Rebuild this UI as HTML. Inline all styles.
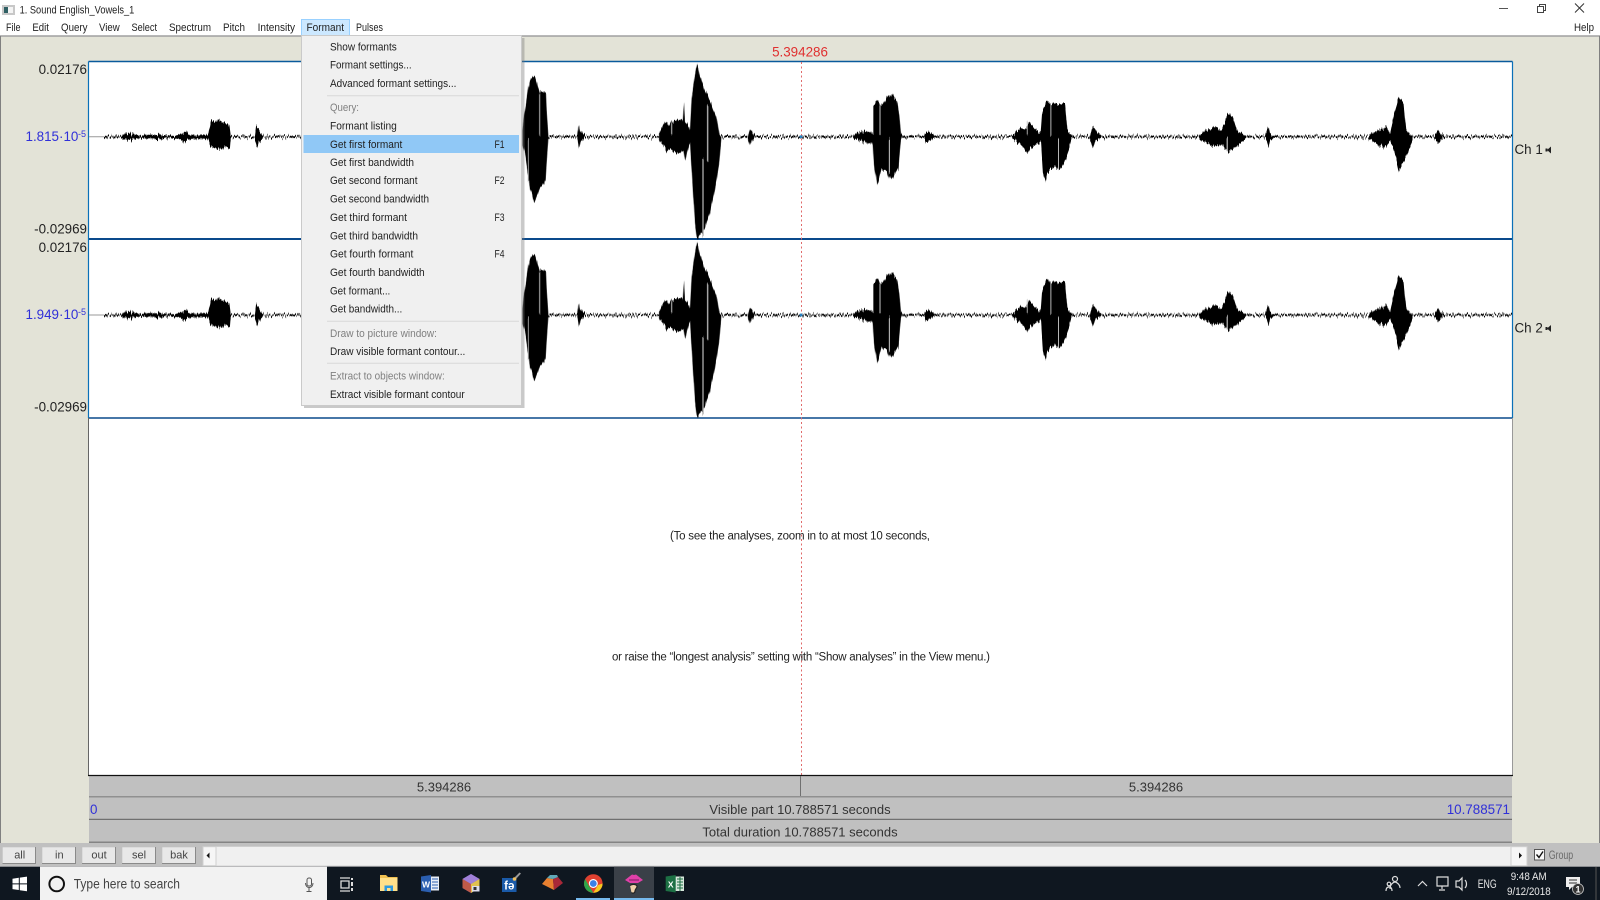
<!DOCTYPE html>
<html><head><meta charset="utf-8"><title>1. Sound English_Vowels_1</title>
<style>
html,body{margin:0;padding:0;background:#fff;width:1600px;height:900px;overflow:hidden}
svg{display:block}
text{font-family:"Liberation Sans",Arial,sans-serif}
.m{font-size:11px;fill:#222}
.d{font-size:11px;fill:#808080}
.k{font-size:13.4px;fill:#222}
.b{font-size:13.4px;fill:#3030d8}
</style></head><body>
<svg xmlns="http://www.w3.org/2000/svg" width="1600" height="900" viewBox="0 0 1600 900">
<defs>
<filter id="jag" filterUnits="userSpaceOnUse" x="85" y="50" width="1430" height="200" color-interpolation-filters="sRGB">
<feTurbulence type="fractalNoise" baseFrequency="0.7 0.015" numOctaves="2" seed="7" result="n"/>
<feColorMatrix in="n" type="matrix" values="0 0 0 0 .5  0 1 0 0 0  0 0 1 0 0  0 0 0 0 1" result="m"/>
<feDisplacementMap in="SourceGraphic" in2="m" scale="9" xChannelSelector="R" yChannelSelector="G"/>
</filter>
<g id="wave">
<line x1="89" y1="136.7" x2="104" y2="136.7" stroke="#aaa" stroke-width="1.2"/>
<g filter="url(#jag)">
<line x1="104" y1="136.7" x2="1512" y2="136.7" stroke="#000" stroke-width="1.8" stroke-dasharray="5 .7 2 .7 7 .7"/>
<g transform="translate(0,50) scale(.33333)" fill="#000">
<polygon points="365,256 372,252 385,250 395,252 410,254 420,258 440,254 460,255 480,252 490,257 520,258 540,254 558,244 566,254 590,256 625,254 632,216 640,210 660,216 675,216 688,226 692,258 692,268 690,294 675,292 665,296 652,298 640,292 632,290 625,268 590,266 566,268 556,278 540,268 520,264 490,266 480,268 460,266 440,266 420,264 400,268 385,270 372,270 365,264"/>
<polygon points="765,258 769,226 778,242 788,258 788,266 778,272 770,291 765,270"/>
</g>
<g transform="translate(520,40) scale(.33333)" fill="#000">
<polygon points="7,270 12,225 18,190 25,140 33,115 40,108 47,115 52,135 60,158 66,154 72,158 78,158 80,210 85,285 85,295 80,370 77,420 70,436 60,441 52,466 48,476 43,488 36,461 30,446 25,410 15,340 7,310"/>
<polygon points="172,285 176,254 181,272 195,286 195,294 182,305 177,324 172,300"/>
<polygon points="417,280 425,264 435,244 442,250 448,256 455,244 465,242 480,239 488,244 492,190 495,244 505,258 510,270 515,172 525,104 532,70 540,112 555,152 570,182 590,232 598,280 604,288 604,296 597,378 585,448 570,518 555,562 540,586 535,594 530,586 525,548 518,440 510,310 502,336 495,366 490,331 478,336 465,341 452,331 440,332 425,310 417,300"/>
<polygon points="684,285 690,268 695,274 705,286 705,294 695,302 690,316 684,298"/>
<polygon points="1000,284 1015,278 1035,274 1050,276 1060,280 1060,194 1075,184 1085,194 1100,174 1115,162 1130,178 1138,222 1143,280 1146,288 1146,296 1143,300 1135,388 1125,398 1112,421 1100,391 1085,391 1072,436 1062,378 1058,308 1045,311 1030,304 1010,300 1000,296"/>
<line x1="59" y1="160" x2="59" y2="285" stroke="#bbb" stroke-width="3"/>
<line x1="25" y1="295" x2="25" y2="420" stroke="#999" stroke-width="3"/>
<line x1="549" y1="355" x2="549" y2="585" stroke="#aaa" stroke-width="4"/>
<line x1="563" y1="200" x2="563" y2="360" stroke="#bbb" stroke-width="4"/>
<line x1="1080" y1="190" x2="1080" y2="285" stroke="#ccc" stroke-width="3"/>
<line x1="1108" y1="295" x2="1108" y2="400" stroke="#ccc" stroke-width="3"/>
<line x1="455" y1="250" x2="455" y2="285" stroke="#ccc" stroke-width="3"/>
</g>
<g transform="translate(900,50) scale(.44643,.33333)" fill="#000">
<polygon points="55,255 60,244 68,248 78,258 78,264 68,270 58,278 55,268"/>
<polygon points="252,256 262,242 272,236 282,236 290,214 296,226 303,238 315,250 318,194 327,156 335,162 345,159 355,162 370,162 375,242 384,255 384,268 372,328 360,361 345,351 330,368 326,398 320,366 316,278 305,286 295,291 285,311 272,286 260,273 252,265"/>
<polygon points="426,255 432,229 440,242 450,256 450,264 438,270 432,298 426,270"/>
<polygon points="670,256 680,244 695,239 705,229 720,242 728,214 735,189 745,199 755,242 775,258 775,265 755,288 745,298 735,304 720,286 700,288 680,273 670,265"/>
<polygon points="818,255 825,229 829,250 836,258 836,264 829,268 825,296 820,268"/>
<polygon points="1050,256 1060,248 1075,239 1090,232 1098,250 1108,184 1118,139 1128,159 1134,242 1148,258 1148,268 1135,318 1118,368 1108,308 1098,270 1090,291 1070,286 1050,266"/>
<polygon points="1198,255 1205,242 1212,252 1220,258 1220,264 1212,268 1205,281 1198,266"/>
<line x1="338" y1="160" x2="338" y2="260" stroke="#ccc" stroke-width="2"/>
<line x1="355" y1="265" x2="355" y2="360" stroke="#ccc" stroke-width="2"/>
<line x1="285" y1="215" x2="285" y2="255" stroke="#bbb" stroke-width="2"/>
<line x1="733" y1="265" x2="733" y2="305" stroke="#aaa" stroke-width="3"/>
</g>
</g>
</g>
</defs>

<!-- window chrome -->
<rect x="0" y="0" width="1600" height="36" fill="#fff"/>
<rect x="2" y="5" width="13" height="10" fill="#c8c8c8"/>
<rect x="4" y="7" width="9" height="6" fill="#f4f4f4"/>
<rect x="4" y="7" width="4" height="6" fill="#2f5f63"/>
<text x="19.6" y="13.5" class="m" textLength="114.7" lengthAdjust="spacingAndGlyphs">1. Sound English_Vowels_1</text>
<rect x="301.5" y="19.5" width="48" height="16" fill="#cce8ff" stroke="#99d1ff"/>
<g>
<text x="6" y="31" class="m" textLength="14.5" lengthAdjust="spacingAndGlyphs">File</text>
<text x="32.4" y="31" class="m" textLength="16.5" lengthAdjust="spacingAndGlyphs">Edit</text>
<text x="61" y="31" class="m" textLength="26.5" lengthAdjust="spacingAndGlyphs">Query</text>
<text x="99" y="31" class="m" textLength="20.7" lengthAdjust="spacingAndGlyphs">View</text>
<text x="131.5" y="31" class="m" textLength="25.5" lengthAdjust="spacingAndGlyphs">Select</text>
<text x="169" y="31" class="m" textLength="42" lengthAdjust="spacingAndGlyphs">Spectrum</text>
<text x="223" y="31" class="m" textLength="22" lengthAdjust="spacingAndGlyphs">Pitch</text>
<text x="257.6" y="31" class="m" textLength="37.5" lengthAdjust="spacingAndGlyphs">Intensity</text>
<text x="306.5" y="31" class="m" textLength="37.5" lengthAdjust="spacingAndGlyphs">Formant</text>
<text x="356" y="31" class="m" textLength="27" lengthAdjust="spacingAndGlyphs">Pulses</text>
<text x="1574" y="31" class="m" textLength="20" lengthAdjust="spacingAndGlyphs">Help</text>
</g>
<line x1="1499" y1="8.5" x2="1508" y2="8.5" stroke="#555"/>
<rect x="1537.5" y="6.5" width="6" height="6" fill="#fff" stroke="#444"/>
<path d="M1539.5 6.5V4.5H1545.5V10.5H1543.5" fill="none" stroke="#444"/>
<path d="M1575 3.5L1584 12.5M1584 3.5L1575 12.5" stroke="#333" fill="none"/>

<!-- canvas -->
<rect x="0" y="36" width="1600" height="807" fill="#e3e3d7"/>
<line x1="0" y1="36" x2="1600" y2="36" stroke="#a0a0a0" stroke-width="1.4"/>
<line x1="0.5" y1="36" x2="0.5" y2="843" stroke="#808080"/>
<line x1="1599.5" y1="36" x2="1599.5" y2="843" stroke="#808080"/>
<rect x="88.5" y="61.5" width="1424" height="714" fill="#fff"/>
<line x1="88.5" y1="61.5" x2="1512.5" y2="61.5" stroke="#0a5a9c" stroke-width="1.4"/>
<line x1="88.5" y1="239" x2="1512.5" y2="239" stroke="#0a4a8c" stroke-width="2"/>
<line x1="88.5" y1="418" x2="1512.5" y2="418" stroke="#0a4a8c" stroke-width="1.6"/>
<line x1="88.5" y1="61.5" x2="88.5" y2="418" stroke="#0a70b8" stroke-width="1.2"/>
<line x1="1512.5" y1="61.5" x2="1512.5" y2="418" stroke="#0a70b8" stroke-width="1.2"/>
<line x1="88.5" y1="418" x2="88.5" y2="775" stroke="#666"/>
<line x1="1512.5" y1="418" x2="1512.5" y2="775" stroke="#999"/>

<use href="#wave"/>
<use href="#wave" transform="translate(0,178.3)"/>
<line x1="801.5" y1="62" x2="801.5" y2="775" stroke="#e06a6a" stroke-width="1" stroke-dasharray="2 2.5"/>
<circle cx="801" cy="136.7" r="1.5" fill="#2a80c0"/>
<circle cx="801" cy="315" r="1.5" fill="#2a80c0"/>

<text x="800" y="56.5" text-anchor="middle" font-size="13.4" fill="#e03030">5.394286</text>
<g class="axis">
<text x="87" y="74" text-anchor="end" class="k">0.02176</text>
<text x="87" y="233.7" text-anchor="end" class="k">-0.02969</text>
<text x="87" y="252" text-anchor="end" class="k">0.02176</text>
<text x="87" y="411.7" text-anchor="end" class="k">-0.02969</text>
<text x="25.5" y="141.2" class="b">1.815·10</text><text x="78" y="137" font-size="9" fill="#3030d8">-5</text>
<text x="25.5" y="319.2" class="b">1.949·10</text><text x="78" y="315" font-size="9" fill="#3030d8">-5</text>
<text x="1514.5" y="154" class="k">Ch 1</text>
<path d="M1547 150l4-3.5v7z" fill="#222"/><rect x="1545.5" y="148.5" width="2" height="3" fill="#222"/>
<text x="1514.5" y="332.5" class="k">Ch 2</text>
<path d="M1547 328.5l4-3.5v7z" fill="#222"/><rect x="1545.5" y="327" width="2" height="3" fill="#222"/>
</g>
<text x="670" y="539.3" font-size="11.5" fill="#222" textLength="260" lengthAdjust="spacing">(To see the analyses, zoom in to at most 10 seconds,</text>
<text x="612" y="660.7" font-size="11.5" fill="#222" textLength="378" lengthAdjust="spacing">or raise the “longest analysis” setting with “Show analyses” in the View menu.)</text>

<!-- bottom bars -->
<rect x="89" y="775" width="1423" height="68" fill="#c0c0c0"/>
<line x1="88" y1="775.5" x2="1513" y2="775.5" stroke="#111" stroke-width="1.2"/>
<line x1="89" y1="796.8" x2="1512" y2="796.8" stroke="#808080" stroke-width="1.2"/>
<line x1="89" y1="819.4" x2="1512" y2="819.4" stroke="#707070" stroke-width="1.2"/>
<line x1="89" y1="842.2" x2="1512" y2="842.2" stroke="#707070" stroke-width="1.2"/>
<line x1="800.5" y1="776" x2="800.5" y2="796" stroke="#707070"/>
<text x="444" y="791.5" text-anchor="middle" font-size="13" fill="#333">5.394286</text>
<text x="1156" y="791.5" text-anchor="middle" font-size="13" fill="#333">5.394286</text>
<text x="800" y="814" text-anchor="middle" font-size="13" fill="#333">Visible part 10.788571 seconds</text>
<text x="800" y="836.5" text-anchor="middle" font-size="13" fill="#333">Total duration 10.788571 seconds</text>
<text x="90" y="814" class="b">0</text>
<text x="1510" y="814" text-anchor="end" class="b">10.788571</text>

<!-- toolbar -->
<rect x="0" y="843" width="1600" height="24" fill="#c0c0c0"/>
<g fill="#e8e8e8">
<rect x="2.7" y="847.3" width="33" height="16"/>
<rect x="42.3" y="847.3" width="33" height="16"/>
<rect x="82.3" y="847.3" width="33" height="16"/>
<rect x="122.3" y="847.3" width="33" height="16"/>
<rect x="162.3" y="847.3" width="33" height="16"/>
</g>
<path d="M35.5 847v16.5H2.5M75.5 847v16.5H42M115.5 847v16.5H82M155.5 847v16.5H122M195.5 847v16.5H162" fill="none" stroke="#8a8a8a"/>
<g font-size="11" fill="#444" text-anchor="middle">
<text x="19.7" y="858.5">all</text><text x="59.3" y="858.5">in</text><text x="99" y="858.5">out</text><text x="139" y="858.5">sel</text><text x="179" y="858.5">bak</text>
</g>
<rect x="203" y="846.7" width="1324" height="19" fill="#f0f0f0"/>
<rect x="203" y="846.7" width="13" height="19" fill="#f6f6f6" stroke="#d0d0d0"/>
<rect x="1511" y="846.7" width="16" height="19" fill="#f6f6f6" stroke="#d0d0d0"/>
<path d="M206.5 855.5l3-3v6z" fill="#111"/>
<path d="M1522 855.5l-3-3v6z" fill="#111"/>
<rect x="1534.5" y="849.5" width="10" height="10.5" fill="#f8f8f8" stroke="#555"/>
<path d="M1536.5 854.5l2.5 3 4-6" fill="none" stroke="#111" stroke-width="1.4"/>
<text x="1548.7" y="859" font-size="11.5" fill="#6a6a6a" textLength="24.5" lengthAdjust="spacingAndGlyphs">Group</text>

<!-- dropdown menu -->
<rect x="304" y="38" width="220.5" height="370" fill="#777" opacity=".4"/>
<rect x="301.5" y="35.5" width="220" height="370" fill="#f0f0f0" stroke="#cacaca"/>
<rect x="303.5" y="135" width="215.5" height="18" fill="#90c8f6"/>
<line x1="327" y1="95.7" x2="519" y2="95.7" stroke="#d8d8d8"/>
<line x1="327" y1="321.3" x2="519" y2="321.3" stroke="#d8d8d8"/>
<line x1="327" y1="363.3" x2="519" y2="363.3" stroke="#d8d8d8"/>
<g>
<text x="330" y="50.5" class="m" textLength="66.8" lengthAdjust="spacingAndGlyphs">Show formants</text>
<text x="330" y="68.5" class="m" textLength="81.6" lengthAdjust="spacingAndGlyphs">Formant settings...</text>
<text x="330" y="87" class="m" textLength="126.4" lengthAdjust="spacingAndGlyphs">Advanced formant settings...</text>
<text x="330" y="111" class="d" textLength="29" lengthAdjust="spacingAndGlyphs">Query:</text>
<text x="330" y="129.5" class="m" textLength="66.8" lengthAdjust="spacingAndGlyphs">Formant listing</text>
<text x="330" y="148" class="m" textLength="72.3" lengthAdjust="spacingAndGlyphs">Get first formant</text>
<text x="330" y="166" class="m" textLength="84" lengthAdjust="spacingAndGlyphs">Get first bandwidth</text>
<text x="330" y="184" class="m" textLength="87.5" lengthAdjust="spacingAndGlyphs">Get second formant</text>
<text x="330" y="202.5" class="m" textLength="99" lengthAdjust="spacingAndGlyphs">Get second bandwidth</text>
<text x="330" y="221" class="m" textLength="77" lengthAdjust="spacingAndGlyphs">Get third formant</text>
<text x="330" y="239.5" class="m" textLength="88" lengthAdjust="spacingAndGlyphs">Get third bandwidth</text>
<text x="330" y="257.5" class="m" textLength="83.3" lengthAdjust="spacingAndGlyphs">Get fourth formant</text>
<text x="330" y="276" class="m" textLength="94.7" lengthAdjust="spacingAndGlyphs">Get fourth bandwidth</text>
<text x="330" y="294.5" class="m" textLength="60.3" lengthAdjust="spacingAndGlyphs">Get formant...</text>
<text x="330" y="312.5" class="m" textLength="72.3" lengthAdjust="spacingAndGlyphs">Get bandwidth...</text>
<text x="330" y="337" class="d" textLength="107" lengthAdjust="spacingAndGlyphs">Draw to picture window:</text>
<text x="330" y="355" class="m" textLength="135.3" lengthAdjust="spacingAndGlyphs">Draw visible formant contour...</text>
<text x="330" y="379.5" class="d" textLength="114.7" lengthAdjust="spacingAndGlyphs">Extract to objects window:</text>
<text x="330" y="398" class="m" textLength="134.7" lengthAdjust="spacingAndGlyphs">Extract visible formant contour</text>
<text x="494.5" y="148" class="m" textLength="10" lengthAdjust="spacingAndGlyphs">F1</text>
<text x="494.5" y="184" class="m" textLength="10" lengthAdjust="spacingAndGlyphs">F2</text>
<text x="494.5" y="221" class="m" textLength="10" lengthAdjust="spacingAndGlyphs">F3</text>
<text x="494.5" y="257.5" class="m" textLength="10" lengthAdjust="spacingAndGlyphs">F4</text>
</g>

<!-- taskbar -->
<rect x="0" y="866.7" width="1600" height="33.3" fill="#0f1720"/>
<path d="M12.5 878.7L18.8 877.8V883.4H12.5ZM19.8 877.6L27 876.6V883.4H19.8ZM12.5 884.4H18.8V890L12.5 889.1ZM19.8 884.4H27V891.2L19.8 890.2Z" fill="#fff"/>
<rect x="40" y="866.7" width="287" height="33.3" fill="#f2f2f2"/>
<circle cx="56.7" cy="884" r="7.3" fill="none" stroke="#111" stroke-width="2"/>
<text x="73.7" y="888.5" font-size="13.5" fill="#444" textLength="106.3" lengthAdjust="spacingAndGlyphs">Type here to search</text>
<rect x="307" y="878" width="4.5" height="8" rx="2" fill="none" stroke="#555"/>
<path d="M305.5 883c0 6 7.5 6 7.5 0M309 888v3M306.5 891.5h5" fill="none" stroke="#555"/>
<!-- task view -->
<path d="M340 878h10M340 891h10M341 881h8v7h-8z" fill="none" stroke="#ddd" stroke-width="1.3"/>
<path d="M352 878v2M352 882v4M352 888v3" stroke="#ddd" stroke-width="2" fill="none"/>
<!-- folder -->
<path d="M380 875h6l2 2h9.5v14h-17.5z" fill="#f0c050"/>
<rect x="380" y="878" width="17.5" height="13" fill="#ffe08a"/>
<path d="M384.5 891v-5.5h8.5v5.5z" fill="#2e9ae0"/>
<rect x="387" y="888" width="3.5" height="3" fill="#ffe08a"/>
<!-- word -->
<rect x="428" y="876.5" width="11" height="14" fill="#e8eef6"/>
<path d="M421 876.5l10-1.5v17.5l-10-1.5z" fill="#2b5fb0"/>
<text x="426" y="887.5" font-size="8.5" font-weight="bold" text-anchor="middle" fill="#fff">W</text>
<path d="M432 879h6M432 882h6M432 885h6M432 888h6" stroke="#2b5fb0"/>
<!-- prism -->
<path d="M471 874l8.5 5v9l-8.5 5-8.5-5v-9z" fill="#7a5fc0"/>
<path d="M471 874l8.5 5-8.5 5-8.5-5z" fill="#a080d8"/>
<path d="M462.5 879l8.5 5v9l-8.5-5z" fill="#c05a48"/>
<path d="M471 884l8.5-5v9l-8.5 5z" fill="#e0c050"/>
<rect x="472" y="886" width="7.5" height="5.5" fill="#dde"/>
<rect x="473.5" y="887" width="3" height="3" fill="#333"/>
<!-- fb -->
<rect x="502" y="878" width="14.5" height="14" fill="#1a5aa8"/>
<path d="M515 877l4.5-4.5 1.5 1-5 5.5z" fill="#999"/>
<circle cx="514.5" cy="879" r="1.8" fill="#f0c060"/>
<text x="509.3" y="889.5" font-size="11.5" font-weight="bold" text-anchor="middle" fill="#fff">fə</text>
<!-- diamond -->
<path d="M542 884l5-6 6 1 1 11z" fill="#e88030"/>
<path d="M553 879l5-2 5 6-9 7z" fill="#a82838"/>
<path d="M547 878l3-3 7 0 1 2-5 2z" fill="#60a8b8"/>
<!-- chrome -->
<circle cx="593.3" cy="883.5" r="9.3" fill="#e04030"/>
<path d="M585.2 879L589.5 887 593.3 892.8A9.3 9.3 0 0 1 585.2 879z" fill="#2ea84a"/>
<path d="M593.3 892.8L598 885 602.6 883.5A9.3 9.3 0 0 1 593.3 892.8z" fill="#f7c820"/>
<circle cx="593.3" cy="883.5" r="4.5" fill="#fff"/>
<circle cx="593.3" cy="883.5" r="3.4" fill="#3b80e8"/>
<rect x="576" y="898" width="34" height="2" fill="#76b9ed"/>
<!-- praat -->
<rect x="614" y="866.7" width="40" height="33.3" fill="#3a4048"/>
<rect x="614" y="898" width="40" height="2" fill="#76b9ed"/>
<path d="M625 880l7-5.5 2 .5 2-.5 7 5.5-5 3h-8z" fill="#e040a8"/>
<path d="M629 880h10" stroke="#7a1a60" stroke-width="1"/>
<path d="M630 885.5c2-1.5 6-1.5 7 .5 .5 2-2 3-2 5 0 2.500-2.500 2.500-3.500 1.500" fill="#f0d0a8" stroke="#222" stroke-width="1.2"/>
<!-- excel -->
<rect x="673" y="876.500" width="11" height="14.500" fill="#d8e8dc"/>
<path d="M665.700 876.500l10-1.500v17.500l-10-1.500z" fill="#1d7044"/>
<text x="670.700" y="887.500" font-size="8.500" font-weight="bold" text-anchor="middle" fill="#fff">X</text>
<path d="M677 879h6M677 882h6M677 885h6M677 888h6M680 877v14" stroke="#1d7044"/>
<!-- tray -->
<g fill="none" stroke="#ddd" stroke-width="1.2">
<circle cx="1395" cy="879" r="2.500"/>
<path d="M1390 889c0-5 4-7 5-7s5 2 5 6"/>
<circle cx="1389" cy="884" r="1.800"/>
<path d="M1386 891c0-3 1-4 3-4s3 1 3 4"/>
<path d="M1418 886l4.500-4.500 4.500 4.500"/>
<path d="M1437 877h11v9h-11zM1442 886v3M1439 890h6"/>
<path d="M1456 881h3l3-3v12l-3-3h-3zM1465 880c2 2 2 6 0 8"/>
</g>
<text x="1477.700" y="888" font-size="11.500" fill="#e8e8e8" textLength="19" lengthAdjust="spacingAndGlyphs">ENG</text>
<text x="1510.700" y="880" font-size="11" fill="#e8e8e8" textLength="36" lengthAdjust="spacingAndGlyphs">9:48 AM</text>
<text x="1507" y="895" font-size="11" fill="#e8e8e8" textLength="43.700" lengthAdjust="spacingAndGlyphs">9/12/2018</text>
<path d="M1566 877h14v10h-8l-3 3v-3h-3z" fill="#eee"/>
<path d="M1569 880h8M1569 883h8" stroke="#333"/>
<circle cx="1578" cy="889" r="5.500" fill="#333" stroke="#ccc" stroke-width=".8"/>
<text x="1578" y="892.500" font-size="9" font-weight="bold" text-anchor="middle" fill="#fff">1</text>
<line x1="1596" y1="867" x2="1596" y2="900" stroke="#555"/>
</svg>
</body></html>
